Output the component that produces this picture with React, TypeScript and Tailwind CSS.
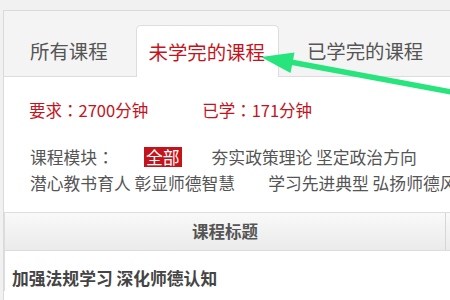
import React from 'react'

const tabs = [
  { label: '所有课程', active: false },
  { label: '未学完的课程', active: true },
  { label: '已学完的课程', active: false },
]

// fullwidth colon centred like the original (TC font centres it)
const Colon = () => <span className="font-['Noto_Sans_CJK_TC',sans-serif]">：</span>

const Arrow = () => (
  <svg className="absolute left-0 top-0 pointer-events-none" width="450" height="300" viewBox="0 0 450 300">
    <line x1="285" y1="61" x2="470" y2="95.5" stroke="#27e47c" strokeWidth="5.5" />
    <polygon points="261,57 294.5,52.5 290.5,73" fill="#27e47c" />
  </svg>
)

export default function App() {
  return (
    <div className="relative w-[450px] h-[300px] overflow-hidden bg-[#f1f1f1] font-['Noto_Sans_CJK_SC','Noto_Sans',sans-serif]">
      <div className="mt-[10px] ml-[3px] w-[600px] h-[290px] border-t border-l border-[#dadada] bg-white">
        {/* tabs */}
        <div className="flex items-end gap-[15px] pl-[13px] h-[66px] bg-[#f4f4f4] border-b border-[#dddddd]">
          {tabs.map((t) => (
            <div
              key={t.label}
              className={
                t.active
                  ? 'h-[52px] -mb-px flex items-center pl-3 pr-[13px] bg-white border border-b-0 border-[#dddddd] rounded-t-[5px] text-[19.4px] text-[#c3141c]'
                  : 'h-[52px] -mb-px flex items-center px-3 border border-transparent text-[19.4px] text-[#555555]'
              }
            >
              {t.label}
            </div>
          ))}
        </div>

        {/* summary */}
        <div className="pl-[25px] pt-[20px] text-[16.5px] leading-[26px] text-[#c3141c] whitespace-nowrap">
          <span>要求<Colon />2700分钟</span>
          <span className="ml-[54px]">已学<Colon />171分钟</span>
        </div>

        {/* modules */}
        <div className="pl-[26px] mt-[21px] text-[16.8px] leading-[26px] text-[#555555] whitespace-nowrap">
          <div className="flex items-center">
            <span className="w-[114px]">课程模块<Colon /></span>
            <span className="px-[2px] h-[20px] leading-[20px] bg-[#c3141c] text-white">全部</span>
            <span className="ml-[30px]">夯实政策理论 坚定政治方向</span>
            <span className="ml-[35px]">提升师德修养</span>
          </div>
          <div className="flex items-center">
            <span>潜心教书育人 彰显师德智慧</span>
            <span className="ml-[33px]">学习先进典型 弘扬师德风范</span>
          </div>
        </div>

        {/* table */}
        <div className="mt-[16px] border-t border-l border-[#dddddd]">
          <div className="flex h-[38px] bg-gradient-to-b from-[#f9f9f9] to-[#ebebeb] border-b border-[#dddddd]">
            <div className="w-[441px] flex items-center justify-center border-r border-[#d6d6d6] text-[16.5px] font-bold text-[#555555]">
              课程标题
            </div>
            <div className="flex-1" />
          </div>
          <div className="pl-[7px] pt-[14px] text-[16.8px] leading-[26px] font-bold text-[#444444]">
            加强法规学习 深化师德认知
          </div>
        </div>
      </div>
      <Arrow />
    </div>
  )
}
